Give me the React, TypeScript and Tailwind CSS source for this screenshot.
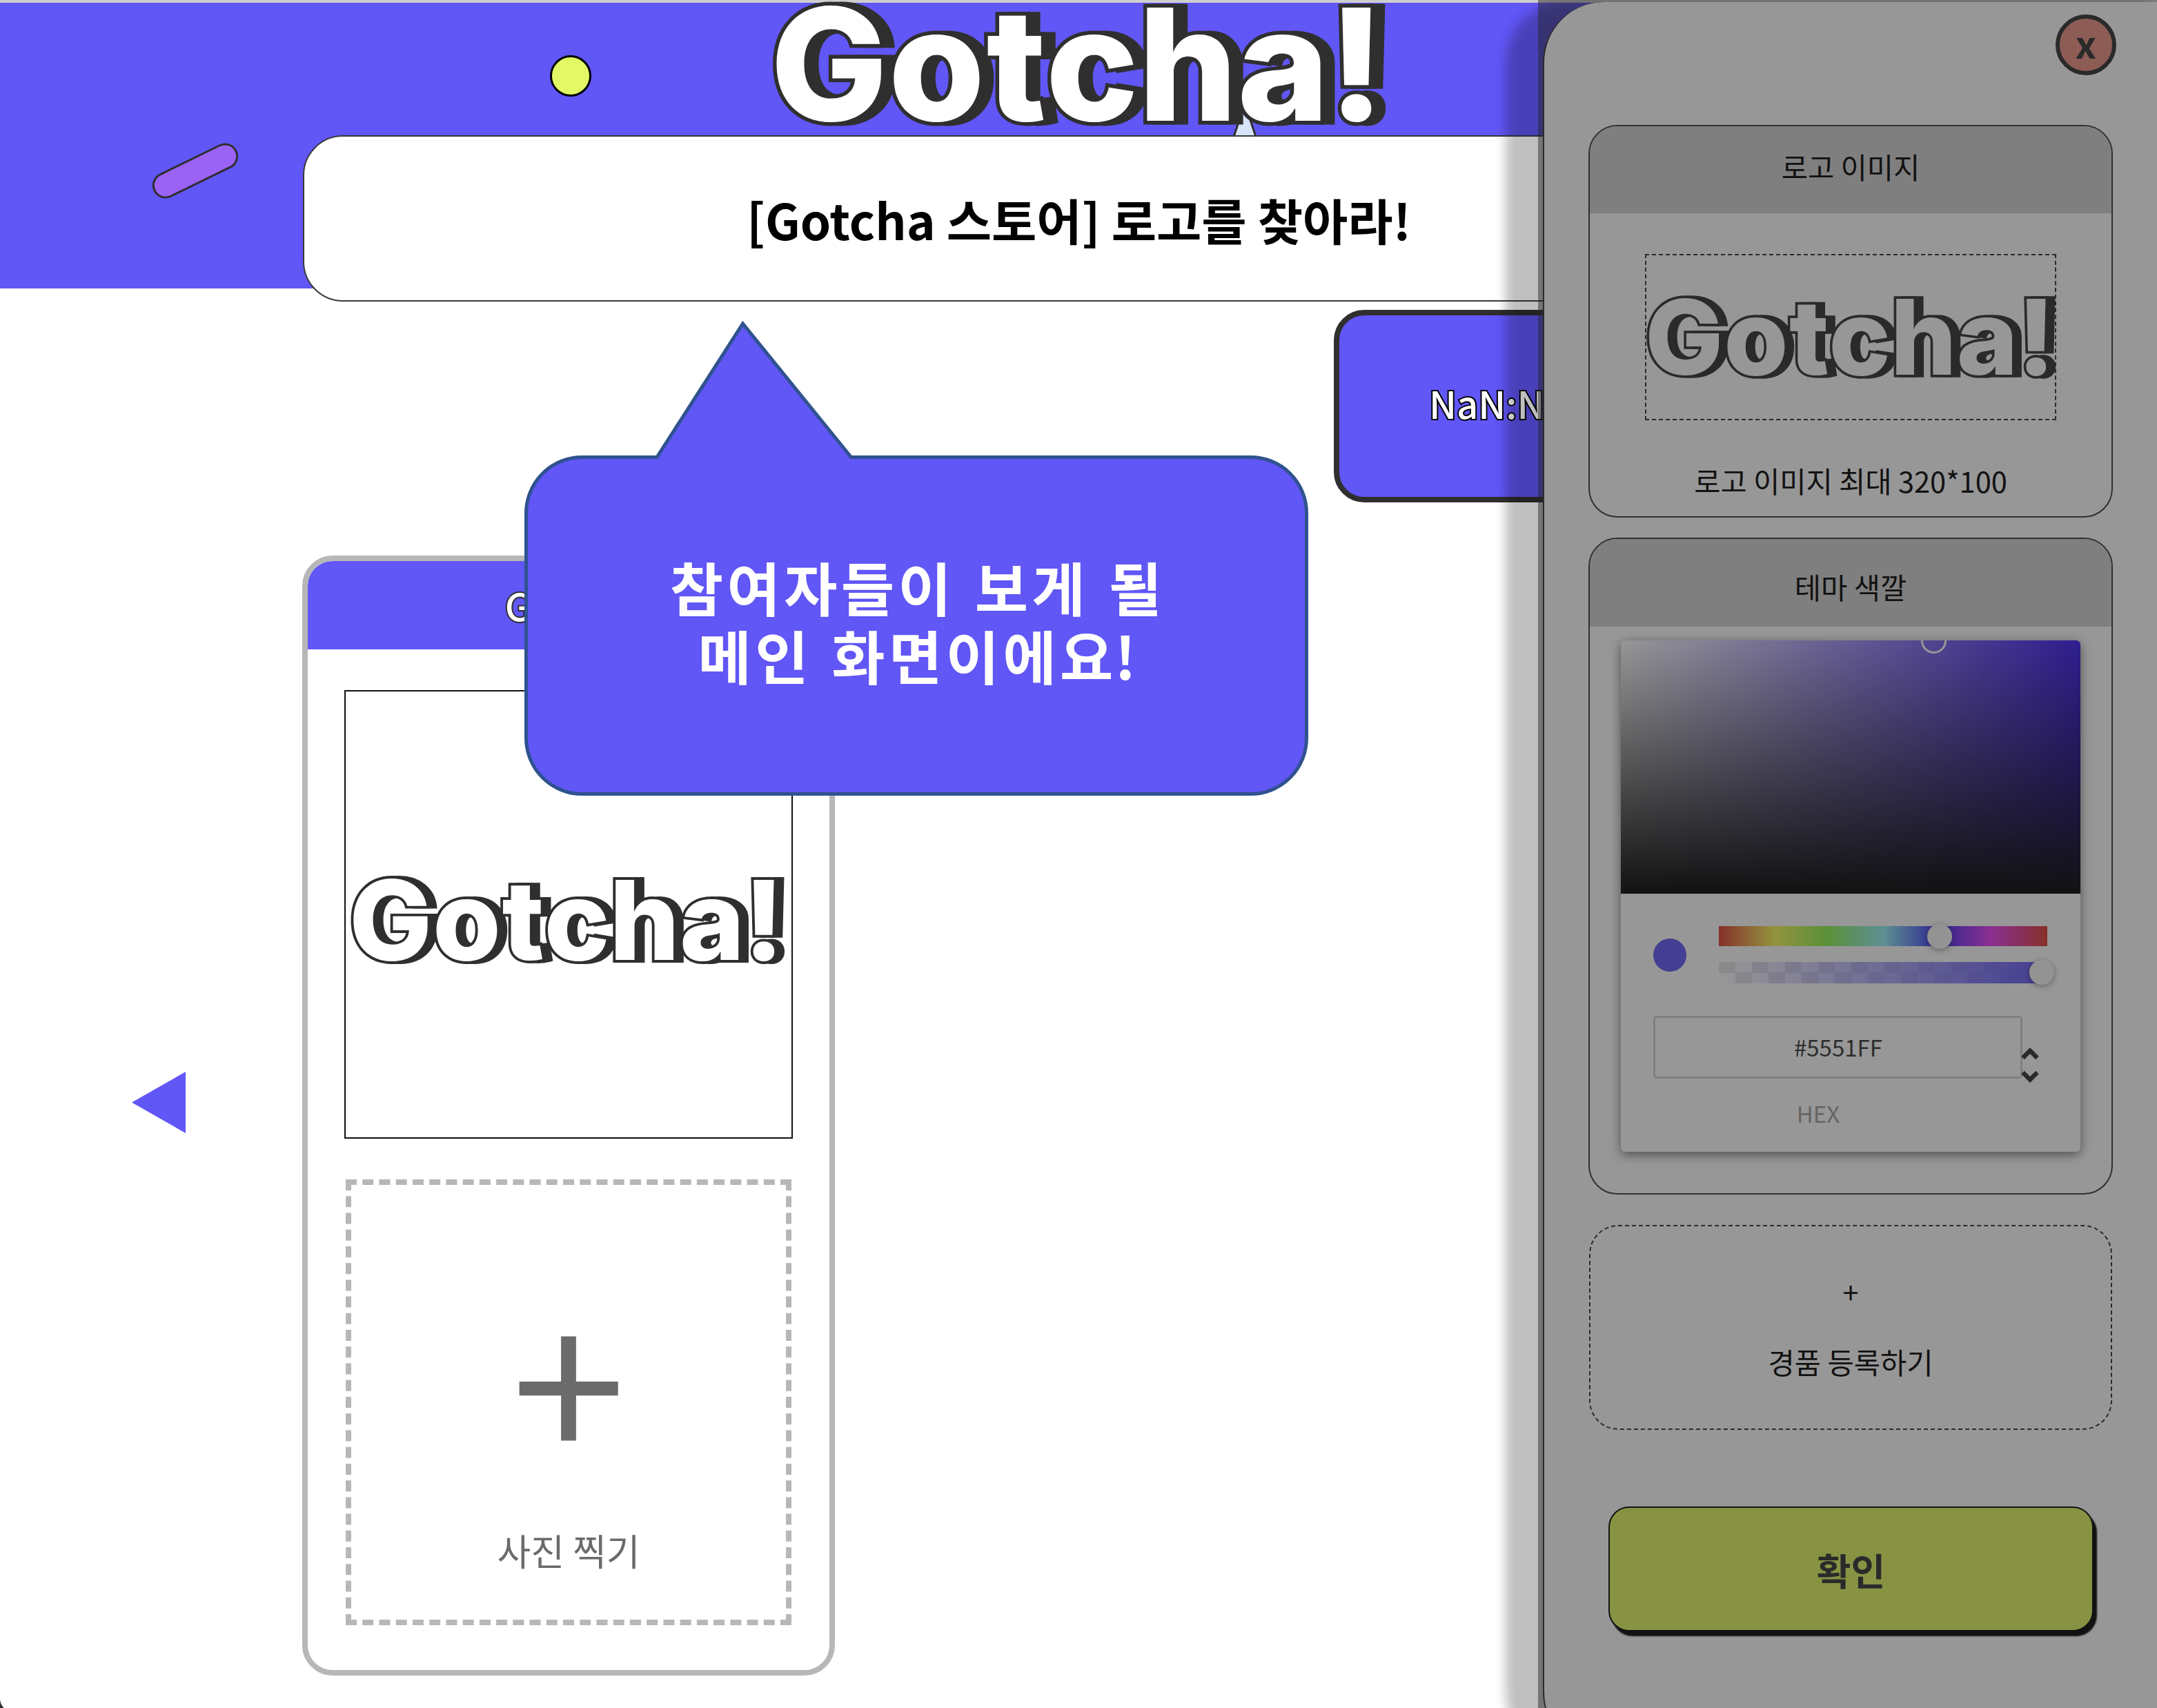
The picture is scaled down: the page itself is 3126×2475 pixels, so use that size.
import React from "react";

type LogoProps = { className?: string };

function Logo({ className }: LogoProps) {
  return (
    <svg viewBox="1118 2 890 182" className={className} aria-label="Gotcha!">
      <g
        fontFamily="Inter, sans-serif"
        fontWeight={800}
        fontSize={226}
        strokeLinejoin="miter"
        strokeWidth={11}
        stroke="#2f2f2f"
      >
        <text x={1133} y={174.7} dx="-1 1 2 2 -0.5 0 -1" fill="#2f2f2f" aria-hidden="true">
          Gotcha!
        </text>
        <text x={1117.5} y={174.7} dx="-1 1 2 2 -0.5 0 -1" fill="#ffffff" className="[paint-order:stroke]">
          Gotcha!
        </text>
      </g>
    </svg>
  );
}

function Header() {
  return (
    <header className="relative flex h-[418px] flex-col items-center border-t-4 border-[#cfcfcf] bg-[#6156f6]">
      <svg viewBox="0 0 140 100" className="absolute left-[213px] top-[194px] h-[100px] w-[140px]">
        <rect x={4.5} y={32} width={131} height={35} rx={17.5} transform="rotate(-26 70 49.5)" fill="#9b62f6" stroke="#2f2f2f" strokeWidth={3} />
      </svg>
      <div className="absolute left-[797px] top-[76px] size-[60px] rounded-full border-3 border-black bg-[#e2f864]" />
      <svg viewBox="0 0 40 50" className="absolute left-[1784px] top-[144px] h-[50px] w-[40px]">
        <path d="M20 2 L4 50 H36 Z" fill="#d7e3fb" stroke="#2f2f2f" strokeWidth={3} />
      </svg>
      <Logo className="relative -mt-[2px] h-[182px] w-[890px] shrink-0" />
      <div className="relative mt-[12px] flex h-[241px] w-[2248px] shrink-0 items-center justify-center rounded-[58px] border-2 border-[#3a3a3a] bg-white">
        <h1 className="pt-[2px] pl-[1px] whitespace-nowrap text-[71px] leading-none font-bold text-black">
          [Gotcha 스토어] 로고를 찾아라!
        </h1>
      </div>
    </header>
  );
}

function PhotoCard() {
  return (
    <section className="flex h-[1623px] w-[772px] flex-col items-center overflow-hidden rounded-[44px] border-8 border-[#b7b7b7] bg-white">
      <div className="flex h-[128px] w-full shrink-0 items-center justify-center bg-[#6156f6] text-[54.5px] leading-none font-medium text-white [paint-order:stroke] [-webkit-text-stroke:4px_#2f2f2f]">
        Gotcha
      </div>
      <div className="mt-[59px] flex h-[650px] w-[650px] shrink-0 items-center justify-center border-2 border-[#111]">
        <Logo className="h-[129px] w-[630px] translate-x-[-2px] translate-y-[8px]" />
      </div>
      <div className="mt-[59px] flex h-[646px] w-[646px] shrink-0 flex-col items-center border-8 border-dashed border-[#b7b7b7] text-[#6b6b6b]">
        <span className="mt-[129px] text-[298px] leading-[292px]">+</span>
        <span className="mt-[82px] text-[53px] leading-none">사진 찍기</span>
      </div>
    </section>
  );
}

function Bubble() {
  return (
    <div className="absolute left-[758px] top-[460px] h-[696px] w-[1142px]">
      <svg viewBox="758 460 1142 696" className="absolute inset-0 size-full">
        <path
          d="M843.5 662.5 H952 L1076.5 469 L1233.5 662.5 H1812.5 A81 81 0 0 1 1893.5 743.5 V1069.5 A81 81 0 0 1 1812.5 1150.5 H843.5 A81 81 0 0 1 762.5 1069.5 V743.5 A81 81 0 0 1 843.5 662.5 Z"
          fill="#6156f6"
          stroke="#2f528f"
          strokeWidth={5}
        />
      </svg>
      <p className="relative pt-[340px] pl-[2px] text-center text-[84px] leading-[99px] font-bold tracking-[5.4px] whitespace-nowrap text-white [word-spacing:4px]">
        참여자들이 보게 될
        <br />
        메인 화면이에<span className="tracking-[2px]">요!</span>
      </p>
    </div>
  );
}

function ColorPicker() {
  return (
    <div className="mt-[20px] flex h-[741px] w-[666px] shrink-0 flex-col rounded-[6px] bg-white shadow-[0_4px_16px_rgba(0,0,0,0.55)]">
      <div className="relative h-[367px] shrink-0 overflow-hidden rounded-t-[6px] bg-[#3818f0] bg-[linear-gradient(to_top,#000,transparent),linear-gradient(to_right,#fff,transparent)]">
        <div className="absolute left-[435px] -top-[18px] size-[37px] rounded-full border-3 border-white" />
      </div>
      <div className="flex items-center pl-[47px] pt-[47px]">
        <div className="size-[48px] rounded-full bg-[#6156f6]" />
        <div className="ml-[47px] w-[476px]">
          <div className="relative h-[29px] bg-[linear-gradient(to_right,#dd3a2e,#f8f857_17%,#8cf24d_33%,#92f2f6_50%,#3828f5_67%,#e93af3_83%,#dd3a2e)]">
            <div className="absolute left-[302px] -top-[3px] size-[36px] rounded-full bg-[#f8f8f8] shadow-[0_2px_8px_rgba(0,0,0,0.4)]" />
          </div>
          <div className="relative mt-[23px] h-[31px] bg-[linear-gradient(to_right,rgba(97,86,246,0),#6156f6),conic-gradient(#fff_25%,#e8e8e8_0_50%,#fff_0_75%,#e8e8e8_0)] bg-[size:100%_100%,48px_31px]">
            <div className="absolute left-[450px] -top-[3px] size-[36px] rounded-full bg-[#f8f8f8] shadow-[0_2px_8px_rgba(0,0,0,0.4)]" />
          </div>
        </div>
      </div>
      <div className="mt-[47px] flex pl-[47px]">
        <div className="flex flex-col items-center">
          <div className="flex h-[91px] w-[535px] items-center justify-center rounded-[5px] border-3 border-[#d2d2d2] pl-[1px] text-[33px] leading-none text-[#333]">
            #5551FF
          </div>
          <span className="mt-[34px] mr-[57px] text-[33px] leading-none text-[#a0a0a0]">HEX</span>
        </div>
        <svg viewBox="0 0 26 56" className="mt-[44px] -ml-[2px] h-[56px] w-[26px]" fill="none" stroke="#2f2f2f" strokeWidth={6.5}>
          <path d="M2.5 17 L13 6.5 L23.5 17" />
          <path d="M2.5 38 L13 48.5 L23.5 38" />
        </svg>
      </div>
    </div>
  );
}

function Drawer() {
  return (
    <aside className="absolute left-[2236px] top-[3px] flex h-[2537px] w-[930px] flex-col rounded-l-[88px] border-l-2 border-[#2f2f2f] bg-white pl-[64px] text-[41.6px] leading-none text-black shadow-[-54px_0_16px_rgba(0,0,0,0.25)]">
      <button className="mt-[18px] ml-[677px] flex size-[88px] shrink-0 items-center justify-center rounded-full border-6 border-[#2f2f2f] bg-[#eb9081] pb-[6px] text-[54px] leading-none font-bold text-[#2f2f2f]">
        x
      </button>

      <section className="mt-[72px] flex h-[569px] w-[760px] shrink-0 flex-col items-center overflow-hidden rounded-[42px] border-2 border-[#3a3a3a]">
        <h2 className="flex h-[126px] w-full shrink-0 items-center justify-center bg-[#d2d2d2] pb-[8px]">로고 이미지</h2>
        <div className="mt-[59px] flex h-[241px] w-[596px] shrink-0 items-center justify-center border-2 border-dashed border-[#2f2f2f]">
          <Logo className="h-[122px] w-[594px] shrink-0 -translate-y-px" />
        </div>
        <p className="mt-[67px]">로고 이미지 최대 320*100</p>
      </section>

      <section className="mt-[29px] flex h-[952px] w-[760px] shrink-0 flex-col items-center overflow-hidden rounded-[42px] border-2 border-[#3a3a3a]">
        <h2 className="flex h-[127px] w-full shrink-0 items-center justify-center bg-[#d2d2d2] pt-[12px]">테마 색깔</h2>
        <ColorPicker />
      </section>

      <button className="mt-[44px] ml-[1px] flex h-[297px] w-[758px] shrink-0 flex-col items-center justify-center gap-[60px] rounded-[42px] border-2 border-dashed border-[#2f2f2f] pb-[2px]">
        <span>+</span>
        <span>경품 등록하기</span>
      </button>

      <button className="mt-[111px] ml-[29px] flex h-[181px] w-[703px] shrink-0 items-center justify-center rounded-[30px] border-2 border-black bg-[#e3f65e] pt-[3px] text-[54px] leading-none font-bold text-[#2f2f2f] shadow-[5px_7px_2px_#000]">
        확인
      </button>
    </aside>
  );
}

export default function App() {
  return (
    <div className="relative h-[2475px] w-[3126px] overflow-hidden bg-white font-['Noto_Sans_CJK_KR',sans-serif]">
      <Header />
      <main className="flex items-start">
        <svg viewBox="0 0 78 89" className="mt-[1135px] ml-[191px] h-[89px] w-[78px]">
          <path d="M0 44.5 L78 0 V89 Z" fill="#6156f6" />
        </svg>
        <div className="mt-[387px] ml-[169px]">
          <PhotoCard />
        </div>
        <div className="mt-[31px] ml-[723px] flex h-[279px] w-[515px] items-center justify-center rounded-[44px] border-8 border-[#2f2f2f] bg-[#6156f6] pb-[8px] text-[54.5px] leading-none font-medium text-white [paint-order:stroke] [-webkit-text-stroke:4px_#000]">
          NaN:NaN
        </div>
      </main>
      <svg viewBox="0 0 6 12" className="absolute bottom-0 left-0 h-[12px] w-[6px]">
        <path d="M0 0 Q1 8 6 12 H0 Z" fill="#2f2f2f" />
      </svg>
      <Drawer />
      <div className="absolute top-0 right-0 h-full w-[897px] bg-[rgba(37,37,37,0.48)]" />
      <Bubble />
    </div>
  );
}
